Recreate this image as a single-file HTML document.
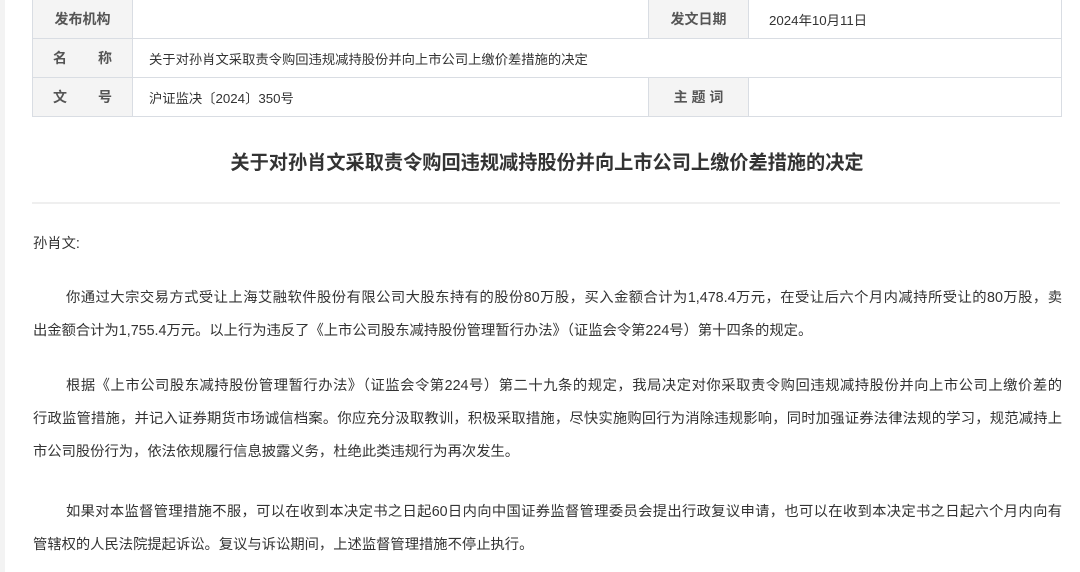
<!DOCTYPE html>
<html><head><meta charset="utf-8"><style>
body{margin:0;width:1080px;height:572px;overflow:hidden;background:#fff;font-family:"Liberation Sans","Noto Sans CJK SC",sans-serif;color:#333;position:relative}
.strip{position:absolute;left:0;top:0;width:5px;height:572px;background:#f3f3f3}
table{position:absolute;left:32px;top:-1px;width:1030px;border-collapse:collapse;font-size:13.3px}
td{border:1px solid #d9dde3;padding:0 0 0 16px;height:38px;color:#333}
td.d{padding-left:20px}
td.l{background:#f4f4f4;text-align:center;padding:0;font-weight:bold;color:#555;font-size:14px}
.title{position:absolute;left:0;width:1094px;top:147px;text-align:center;font-size:19.2px;font-weight:bold;color:#333}
.sep{position:absolute;left:32px;top:202px;width:1028px;height:2px;background:#efefef}
.p{position:absolute;left:33px;width:1029px;font-size:14.3px;line-height:33px;color:#333;white-space:nowrap}
.j{text-align:justify;text-align-last:justify;white-space:normal;width:1029px;box-sizing:border-box}
.i{padding-left:33px}
</style></head><body>
<div class="strip"></div>
<table>
<tr><td class="l" style="width:99px">发布机构</td><td style="width:499px"></td><td class="l" style="width:99px">发文日期</td><td class="d">2024年10月11日</td></tr>
<tr><td class="l">名&nbsp;&nbsp;&nbsp;&nbsp;&nbsp;&nbsp;&nbsp;&nbsp;称</td><td colspan="3">关于对孙肖文采取责令购回违规减持股份并向上市公司上缴价差措施的决定</td></tr>
<tr><td class="l">文&nbsp;&nbsp;&nbsp;&nbsp;&nbsp;&nbsp;&nbsp;&nbsp;号</td><td>沪证监决〔2024〕350号</td><td class="l">主 题 词</td><td></td></tr>
</table>
<div class="title">关于对孙肖文采取责令购回违规减持股份并向上市公司上缴价差措施的决定</div>
<div class="sep"></div>
<div class="p" style="top:228px">孙肖文:</div>
<div class="p" style="top:282px">
<div class="j i">你通过大宗交易方式受让上海艾融软件股份有限公司大股东持有的股份80万股，买入金额合计为1,478.4万元，在受让后六个月内减持所受让的80万股，卖</div>
<div>出金额合计为1,755.4万元。以上行为违反了《上市公司股东减持股份管理暂行办法》（证监会令第224号）第十四条的规定。</div></div>
<div class="p" style="top:370px">
<div class="j i">根据《上市公司股东减持股份管理暂行办法》（证监会令第224号）第二十九条的规定，我局决定对你采取责令购回违规减持股份并向上市公司上缴价差的</div>
<div class="j">行政监管措施，并记入证券期货市场诚信档案。你应充分汲取教训，积极采取措施，尽快实施购回行为消除违规影响，同时加强证券法律法规的学习，规范减持上</div>
<div>市公司股份行为，依法依规履行信息披露义务，杜绝此类违规行为再次发生。</div></div>
<div class="p" style="top:496px">
<div class="j i">如果对本监督管理措施不服，可以在收到本决定书之日起60日内向中国证券监督管理委员会提出行政复议申请，也可以在收到本决定书之日起六个月内向有</div>
<div>管辖权的人民法院提起诉讼。复议与诉讼期间，上述监督管理措施不停止执行。</div></div>
</body></html>
